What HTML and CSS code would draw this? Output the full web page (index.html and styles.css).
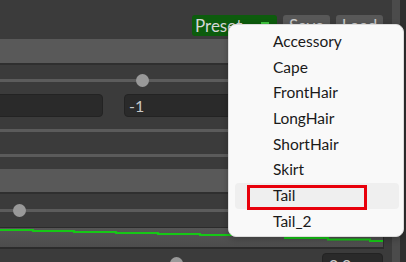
FILE: index.html
```html
<!DOCTYPE html>
<html>
<head>
<meta charset="utf-8">
<link rel="stylesheet" href="styles.css">
</head>
<body>
<div class="app">
  <div class="main">
    <div class="toolbar">
      <div class="btn preset"><span>Preset</span><span class="caret"></span></div>
      <div class="btn">Save</div>
      <div class="btn">Load</div>
    </div>
    <div class="band"></div>
    <div class="slider gap-a"><div class="track"><div class="thumb" style="left:142px"></div></div></div>
    <div class="fields">
      <div class="field first"></div>
      <div class="field">-1</div>
    </div>
    <div class="rule r1"></div>
    <div class="rule r2"></div>
    <div class="band b2"></div>
    <div class="slider gap-b"><div class="track"><div class="thumb" style="left:19px"></div></div></div>
    <div class="curve">
      <svg width="383" height="19" viewBox="0 0 383 19">
        <polyline fill="none" stroke="#16c816" stroke-width="2" points="0,2 33,2 33,3 74,3 74,4 116,4 116,5 158,5 158,6 200,6 200,7 242,7 242,8 285,8 285,10 328,10 328,11.5 370,11.5 370,13 383,13"/>
      </svg>
    </div>
    <div class="bottom">
      <div class="slider-b"><div class="thumb" style="left:176px;top:4px"></div></div>
      <div class="field small">0.0</div>
    </div>
  </div>
  <div class="scroll"></div>
  <div class="edge"></div>

  <div class="menu">
    <div class="item">Accessory</div>
    <div class="item">Cape</div>
    <div class="item">FrontHair</div>
    <div class="item">LongHair</div>
    <div class="item">ShortHair</div>
    <div class="item">Skirt</div>
    <div class="item hover">Tail<span class="mark"></span></div>
    <div class="item">Tail_2</div>
  </div>
</div>
</body>
</html>
```

FILE: styles.css
```css
* { box-sizing: border-box; }
html, body { margin: 0; padding: 0; }
body {
  width: 406px;
  height: 262px;
  overflow: hidden;
  background: #3b3b3b;
  font-family: Lato, "Noto Sans", sans-serif;
}
.app {
  position: relative;
  display: flex;
  width: 406px;
  height: 262px;
}
.main {
  width: 392px;
  display: flex;
  flex-direction: column;
  overflow: hidden;
}
.main > * { flex-shrink: 0; }
.scroll { width: 8px; background: #4b4b4b; }
.edge { width: 6px; background: #2f2f2f; }

.toolbar {
  display: flex;
  justify-content: flex-end;
  gap: 6px;
  padding: 15px 9px 0 0;
  height: 36px;
  margin-bottom: 3px;
}
.btn {
  height: 21px;
  width: 47px;
  border-radius: 3px;
  background: #585858;
  color: #c8c8c8;
  font-size: 17px;
  line-height: 21px;
  text-align: center;
  white-space: nowrap;
  overflow: hidden;
}
.btn.preset {
  width: 85px;
  background: #0d5c0d;
  color: #d6d6d6;
  text-align: left;
  padding-left: 3px;
  display: flex;
  align-items: center;
  gap: 19px;
}
.caret {
  width: 8px; height: 4px;
  background: #3fc43f;
  margin-top: -3px;
}
.band {
  height: 26px;
  background: #595959;
  border-bottom: 2px solid #2f2f2f;
}
.b2 { height: 25px; margin-top: 12px; }
.slider { height: 3px; }
.gap-a { margin: 14px 0 12px; }
.gap-b { margin: 15px 0 15px; }
.track {
  position: relative;
  height: 3px;
  background: #5c5c5c;
}
.thumb {
  position: absolute;
  width: 13px; height: 13px;
  margin-left: -6.5px;
  top: -5px;
  border-radius: 50%;
  background: #999999;
}
.fields {
  display: grid;
  grid-template-columns: 113px 1fr;
  gap: 21px;
  height: 23px;
  margin-left: -10px;
  margin-right: 9px;
}
.field {
  background: #2a2a2a;
  border: 1px solid #232323;
  border-radius: 4px;
  color: #c8c8c8;
  font-size: 16px;
  line-height: 21px;
  padding-left: 4px;
}
.rule { height: 3px; background: #5b5b5b; }
.r1 { margin-top: 12px; }
.r2 { margin-top: 22px; }
.curve {
  height: 22px;
  width: 384px;
  border-top: 1px solid #2b2b2b;
  border-bottom: 2px solid #2b2b2b;
  border-right: 1px solid #2b2b2b;
  background: linear-gradient(#565656, #4c4c4c);
}
.curve svg { display: block; }
.bottom {
  position: relative;
  display: flex;
  justify-content: flex-end;
  margin-top: 4px;
  margin-right: 9px;
  height: 23px;
}
.slider-b { position: absolute; left: 0; top: 0; width: 100%; }
.field.small { width: 61px; padding-left: 6px; }

.menu {
  position: absolute;
  left: 228px;
  top: 24px;
  width: 176px;
  height: 213px;
  background: #f9f9f9;
  border: 1px solid #dcdcdc;
  border-radius: 8px;
  box-shadow: 0 2px 6px rgba(0,0,0,0.25);
  padding: 4px 4px 0 6px;
  font-family: Lato, "Noto Sans", sans-serif;
}
.item {
  position: relative;
  height: 25.7px;
  line-height: 25.7px;
  padding-left: 38px;
  font-size: 15.5px;
  color: #1a1a1a;
  border-radius: 4px;
}
.item.hover { background: #efefef; }
.mark {
  position: absolute;
  left: 12px;
  top: 2px;
  width: 120px;
  height: 25px;
  border: 3px solid #e8000b;
}
```
